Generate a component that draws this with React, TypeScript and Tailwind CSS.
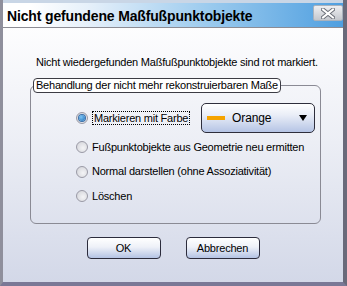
import { ReactNode } from "react";

const Radio = ({ checked = false }: { checked?: boolean }) => (
  <span className="relative flex h-[12px] w-[12px] shrink-0 items-center justify-center rounded-full border border-[#9a9aa6] bg-[radial-gradient(circle_at_60%_60%,#f4f4f6,#cfd0d6)]">
    {checked && (
      <span className="h-[6px] w-[6px] rounded-full bg-[radial-gradient(circle_at_35%_35%,#7cc4f4,#1f6fb8)] shadow-[0_0_0_1px_#3a6ea8]" />
    )}
  </span>
);

const Option = ({ children, checked, className }: { children: ReactNode; checked?: boolean; className?: string }) => (
  <div className={"flex items-center gap-[4px] " + (className ?? "")}>
    <Radio checked={checked} />
    {children}
  </div>
);

const Button = ({ label }: { label: string }) => (
  <button className="flex h-[22px] w-[74px] items-center justify-center rounded-[4px] border border-[#2c2c3c] bg-[linear-gradient(#ffffff,#eef1f8_45%,#b4c3e4)] text-[11px] tracking-[-0.2px] text-black">
    {label}
  </button>
);

export default function App() {
  return (
    <div
      className="flex h-[286px] w-[347px] flex-col border-b-[4px] border-l-[3px] border-r-[4px] border-b-[#7a7896] border-l-[#8f8f9c] border-r-[#6a6a7a] text-[11px] tracking-[-0.22px] text-black"
      style={{ fontFamily: '"Liberation Sans", Arial, sans-serif' }}
    >
      <div className="flex h-[28px] shrink-0 items-center justify-between border-b border-t-[3px] border-b-[#8c8c94] border-t-[#c9d6e6] bg-[linear-gradient(90deg,#ffffff_8%,#e6f0fa_25%,#9ccbee_60%,#4f9fe0)] pl-[4px] pr-0">
        <span className="pt-[3px] text-[14px] font-bold tracking-[-0.15px]">Nicht gefundene Maßfußpunktobjekte</span>
        <div className="mb-[4px] flex h-[16px] w-[30px] items-center justify-center rounded-[2px] border border-[#a9b2bd] bg-[linear-gradient(#eeeff2,#c4c7cd)]">
          <svg width="14" height="11" viewBox="0 0 14 11">
            <path d="M2 1.5 L12 9.5 M12 1.5 L2 9.5" stroke="#6b6f78" strokeWidth="4" strokeLinecap="square" />
            <path d="M2 1.5 L12 9.5 M12 1.5 L2 9.5" stroke="#ffffff" strokeWidth="2" strokeLinecap="square" />
          </svg>
        </div>
      </div>

      <div className="flex flex-1 flex-col bg-[linear-gradient(#fdfdfe,#eceef5_45%,#d3d8e8)]">
        <p className="mt-[27px] h-[14px] pl-[33px] leading-[14px]">
          Nicht wiedergefunden Maßfußpunktobjekte sind rot markiert.
        </p>

        <fieldset className="ml-[27px] mt-[9px] h-[146px] w-[291px] rounded-[6px] border border-[#8a8a94] px-0 pb-0 pt-0">
          <legend className="ml-[2px] h-[15px] rounded-[4px] border border-[#3c3c44] bg-white px-[2px] leading-[13px]">
            Behandlung der nicht mehr rekonstruierbaren Maße
          </legend>
          <div className="flex flex-col pl-[45px]">
            <Option checked className="mt-[10px] h-[30px]">
              <span className="border border-dotted border-black px-[1px] leading-[12px]">Markieren mit Farbe</span>
              <div className="ml-auto mr-[5px] flex h-[30px] w-[114px] items-center rounded-[5px] border border-[#2e2e3c] bg-[linear-gradient(#ffffff,#e9edf7_40%,#b5c4e5)] pl-[5px] pr-[7px]">
                <span className="h-[4px] w-[18px] bg-[#f5a300]" />
                <span className="ml-[7px] text-[12px] tracking-[-0.1px]">Orange</span>
                <svg className="ml-auto" width="8" height="8" viewBox="0 0 8 8">
                  <path d="M0 1 H8 L4 7 Z" fill="#000" />
                </svg>
              </div>
            </Option>
            <Option className="mt-[2px] h-[24px]">Fußpunktobjekte aus Geometrie neu ermitten</Option>
            <Option className="h-[25px]">Normal darstellen (ohne Assoziativität)</Option>
            <Option className="h-[24px]">Löschen</Option>
          </div>
        </fieldset>

        <div className="mt-[13px] flex justify-center gap-[25px]">
          <Button label="OK" />
          <Button label="Abbrechen" />
        </div>
      </div>
    </div>
  );
}
